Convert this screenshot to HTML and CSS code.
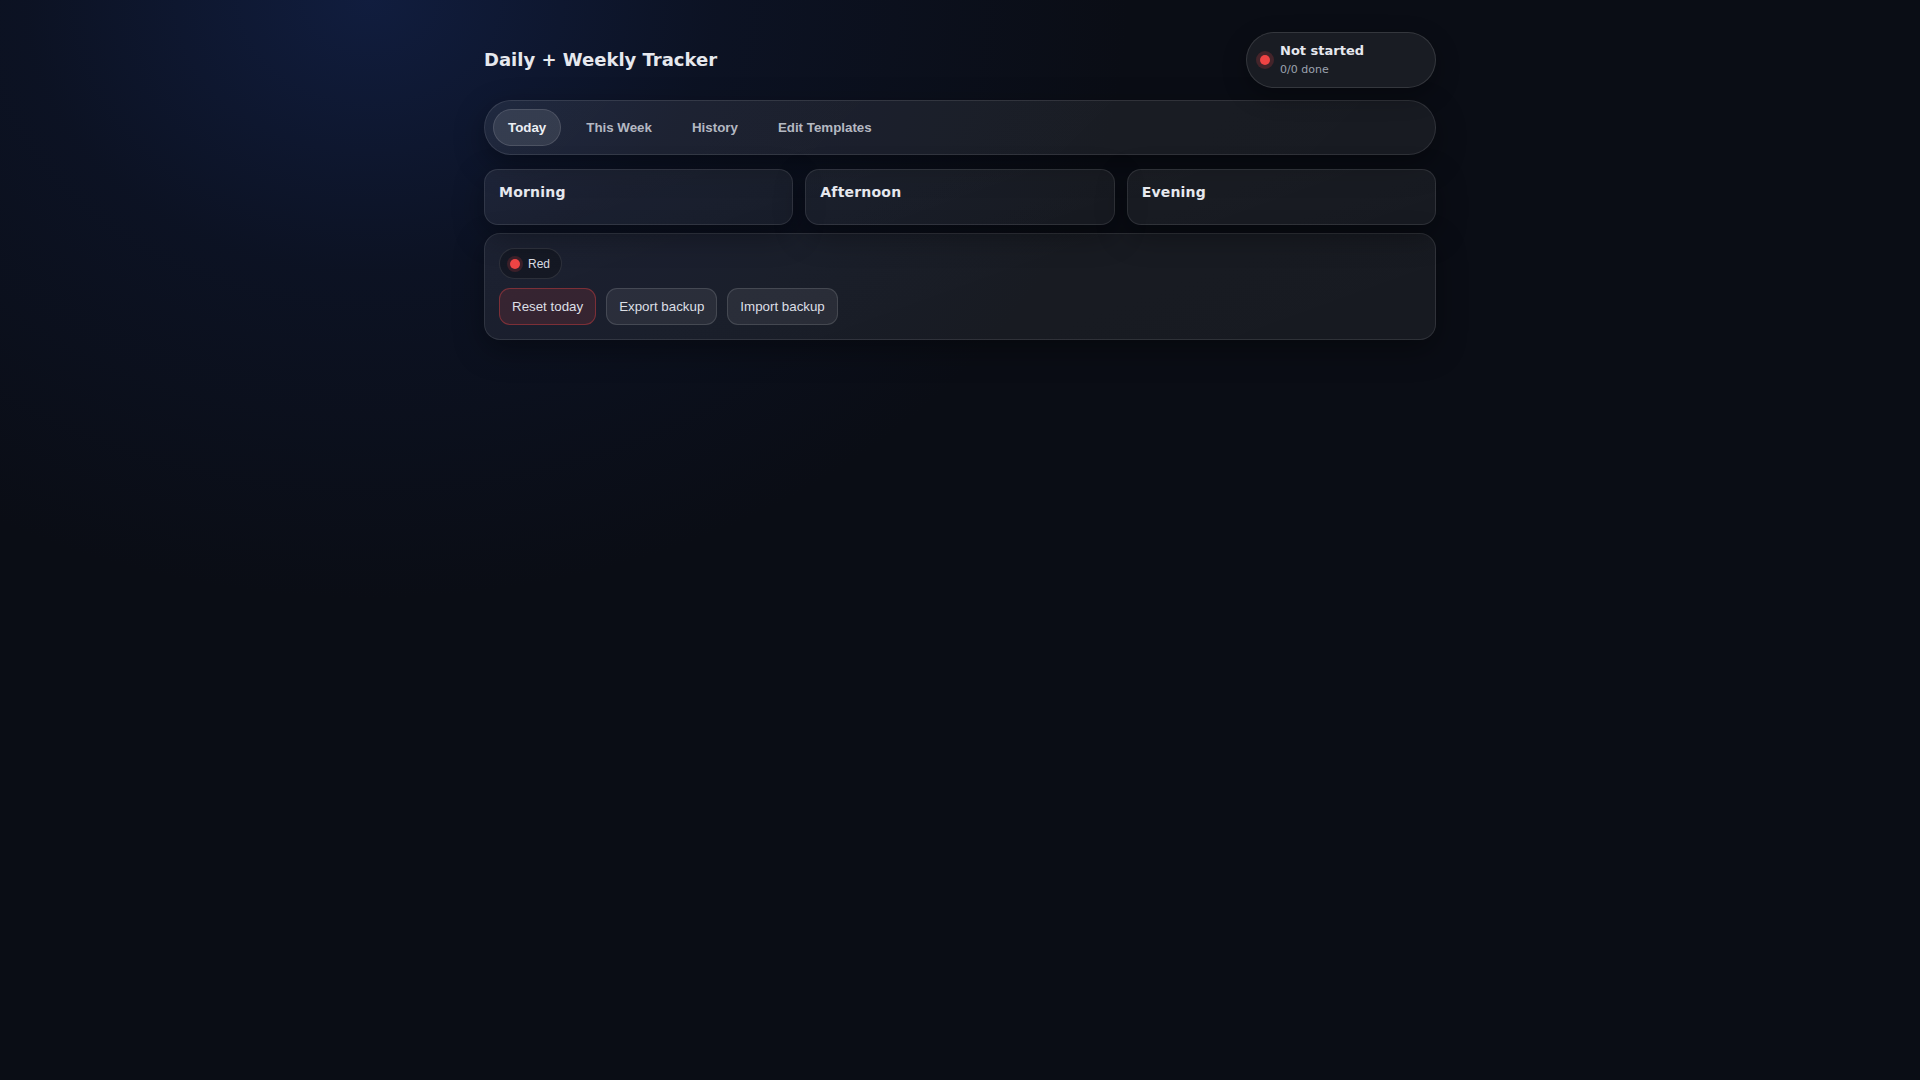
FILE: index.html
```html
<!DOCTYPE html>
<html lang="en">
<head>
<meta charset="utf-8">
<title>Daily + Weekly Tracker</title>
<link rel="stylesheet" href="styles.css">
</head>
<body>
<div class="app">
  <header class="header">
    <h1 class="title">Daily + Weekly Tracker</h1>
    <div class="status">
      <span class="dot"></span>
      <div class="status-text">
        <div class="status-main">Not started</div>
        <div class="status-sub">0/0 done</div>
      </div>
    </div>
  </header>

  <nav class="tabs">
    <button class="tab active">Today</button>
    <button class="tab">This Week</button>
    <button class="tab">History</button>
    <button class="tab">Edit Templates</button>
  </nav>

  <section class="periods">
    <div class="card period"><h2 class="period-title">Morning</h2></div>
    <div class="card period"><h2 class="period-title">Afternoon</h2></div>
    <div class="card period"><h2 class="period-title">Evening</h2></div>
  </section>

  <section class="card footer-card">
    <button class="chip"><span class="chip-dot"></span>Red</button>
    <div class="actions">
      <button class="btn danger">Reset today</button>
      <button class="btn">Export backup</button>
      <button class="btn">Import backup</button>
    </div>
  </section>
</div>
</body>
</html>
```
FILE: styles.css
```css
* { box-sizing: border-box; }

html, body { height: 100%; }

body {
  margin: 0;
  min-height: 100vh;
  font-family: "DejaVu Sans", "Noto Sans", sans-serif;
  color: #e5e7eb;
  background:
    radial-gradient(ellipse 760px 600px at 370px 0px, rgba(22, 42, 96, 0.55) 0%, rgba(18, 34, 78, 0.25) 45%, rgba(11, 14, 22, 0) 100%),
    #0a0d15;
}

.app {
  width: 952px;
  margin: 0 auto;
  padding-top: 32px;
}

.header {
  display: flex;
  justify-content: space-between;
  align-items: center;
  margin-bottom: 12px;
}

.title {
  margin: 0 0 2px;
  font-size: 18px;
  font-weight: 700;
  color: #e6e8ee;
}

.status {
  width: 190px;
  height: 56px;
  display: flex;
  align-items: center;
  gap: 10px;
  padding: 0 13px;
  border-radius: 999px;
  border: 1px solid rgba(255, 255, 255, 0.12);
  background: #191c23;
  box-shadow: 0 8px 24px rgba(0, 0, 0, 0.3);
}

.dot {
  width: 10px;
  height: 10px;
  border-radius: 50%;
  background: #ef4444;
  box-shadow: 0 0 0 4px rgba(239, 68, 68, 0.2);
  flex: none;
}

.status-text {
  display: flex;
  flex-direction: column;
  gap: 4px;
  margin-top: -1px;
}

.status-main {
  font-size: 13px;
  font-weight: 700;
  line-height: 16px;
  color: #e6e8ee;
}

.status-sub {
  font-size: 11px;
  line-height: 14px;
  color: #9ca3af;
}

.tabs {
  display: flex;
  gap: 10px;
  padding: 8px;
  border-radius: 999px;
  border: 1px solid rgba(255, 255, 255, 0.1);
  background: linear-gradient(135deg, rgba(255, 255, 255, 0.075), rgba(255, 255, 255, 0.06));
  box-shadow: 0 10px 30px rgba(0, 0, 0, 0.35);
  margin-bottom: 14px;
}

.tab {
  font-family: "Liberation Sans", Arial, sans-serif;
  font-size: 13.333px;
  font-weight: 700;
  padding: 10px 14px;
  border-radius: 999px;
  border: 1px solid transparent;
  background: transparent;
  color: #b4b8c2;
  cursor: pointer;
}

.tab.active {
  background: rgba(255, 255, 255, 0.1);
  border-color: rgba(255, 255, 255, 0.12);
  color: #eceef3;
}

.card {
  border: 1px solid rgba(255, 255, 255, 0.1);
  border-radius: 16px;
  background: linear-gradient(160deg, rgba(255, 255, 255, 0.065), rgba(255, 255, 255, 0.055));
  box-shadow: 0 10px 30px rgba(0, 0, 0, 0.35);
}

.periods {
  display: grid;
  grid-template-columns: repeat(3, 1fr);
  gap: 12px;
  margin-bottom: 8px;
}

.period {
  min-height: 56px;
  padding: 13px 14px 12px;
  border-radius: 14px;
}

.period-title {
  margin: 0;
  font-size: 14px;
  line-height: 18px;
  font-weight: 700;
  letter-spacing: 0.2px;
  color: #e6e8ee;
}

.footer-card {
  padding: 14px;
  display: flex;
  flex-direction: column;
  align-items: flex-start;
  gap: 9px;
}

.chip {
  height: 31px;
  display: inline-flex;
  align-items: center;
  gap: 8px;
  padding: 0 11px 0 10px;
  border-radius: 999px;
  border: 1px solid rgba(255, 255, 255, 0.1);
  background: rgba(0, 0, 0, 0.25);
  font-family: "Liberation Sans", Arial, sans-serif;
  font-size: 12px;
  color: #d8dbe2;
}

.chip-dot {
  width: 10px;
  height: 10px;
  border-radius: 50%;
  background: #ef4444;
  box-shadow: 0 0 0 3px rgba(239, 68, 68, 0.18);
}

.actions {
  display: flex;
  gap: 10px;
}

.btn {
  font-family: "Liberation Sans", Arial, sans-serif;
  font-size: 13.333px;
  padding: 10px 12px;
  border-radius: 11px;
  border: 1px solid rgba(255, 255, 255, 0.13);
  background: rgba(255, 255, 255, 0.07);
  color: #dcdfe5;
  cursor: pointer;
}

.btn.danger {
  background: rgba(239, 68, 68, 0.13);
  border-color: rgba(239, 68, 68, 0.38);
}
```
